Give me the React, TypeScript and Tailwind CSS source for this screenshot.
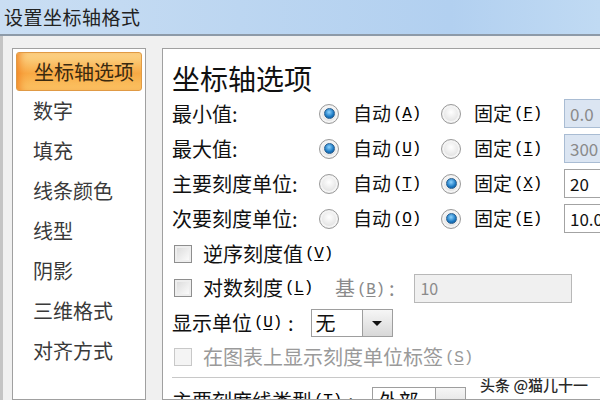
import React from "react";

const F = { fontFamily: '"Noto Sans CJK SC", "Noto Sans", sans-serif' };

function Key({ k }: { k: string }) {
  return (
    <span className="text-[16px] ml-[2px] font-['Liberation_Mono',monospace] tracking-[-0.3px]">
      (<span className="underline underline-offset-2">{k}</span>)
    </span>
  );
}

function Radio({ on }: { on: boolean }) {
  return (
    <span className="w-[20px] h-[20px] rounded-full border border-[#9a9a9a] bg-[radial-gradient(circle_at_50%_40%,#ffffff,#d4d4d4)] flex items-center justify-center shrink-0 shadow-[inset_0_0_0_2px_#f4f4f4]">
      {on && (
        <span className="w-[11px] h-[11px] rounded-full bg-[radial-gradient(circle_at_45%_35%,#8fd4ff,#1a78c2_60%,#0b4f8c)] border border-[#2a5f8f]" />
      )}
    </span>
  );
}

function Check({ dim }: { dim?: boolean }) {
  return (
    <span
      className={
        "w-[18px] h-[18px] shrink-0 border " +
        (dim
          ? "border-[#c8c8c8] bg-[#f4f4f4]"
          : "border-[#8e8e8e] bg-[linear-gradient(135deg,#d8d8d8,#ffffff)] shadow-[inset_0_0_0_2px_#eeeeee]")
      }
    />
  );
}

function AxisRow({
  label,
  a,
  b,
  autoOn,
  value,
  disabled,
}: {
  label: string;
  a: string;
  b: string;
  autoOn: boolean;
  value: string;
  disabled: boolean;
}) {
  return (
    <div className="flex items-center h-[35px] shrink-0">
      <div className="w-[147px] shrink-0 text-[20px] text-[#111]">{label}</div>
      <div className="w-[122px] shrink-0 flex items-center">
        <Radio on={autoOn} />
        <span className="ml-[14px] text-[19px] text-[#111]">自动</span>
        <Key k={a} />
      </div>
      <div className="w-[123px] shrink-0 flex items-center">
        <Radio on={!autoOn} />
        <span className="ml-[13px] text-[19px] text-[#111]">固定</span>
        <Key k={b} />
      </div>
      <div
        className={
          "h-[29px] w-[60px] shrink-0 border flex items-center pl-[5px] text-[17px] " +
          (disabled
            ? "bg-[#dbe5f2] border-[#a9bcd3] text-[#8a8a8a]"
            : "bg-white border-[#a3a3a3] text-[#111]")
        }
      >
        {value}
      </div>
    </div>
  );
}

function Select({ text, w, pl }: { text: string; w: string; pl: string }) {
  return (
    <div className={"h-[28px] border border-[#9e9e9e] flex bg-white shrink-0 " + w}>
      <span className={"flex-1 flex items-center text-[20px] text-[#111] " + pl}>{text}</span>
      <span className="w-[30px] border-l border-[#9e9e9e] bg-[linear-gradient(180deg,#f6f6f6,#d8d8d8)] flex items-center justify-center">
        <span className="w-0 h-0 border-l-[5px] border-r-[5px] border-t-[5px] border-l-transparent border-r-transparent border-t-[#111]" />
      </span>
    </div>
  );
}

export default function App() {
  const items = ["数字", "填充", "线条颜色", "线型", "阴影", "三维格式", "对齐方式"];
  return (
    <div style={F} className="w-[600px] h-[400px] overflow-hidden relative bg-[#f0f0f0] flex flex-col">
      <div className="h-[36px] shrink-0 bg-[linear-gradient(90deg,#cadef3,#bcd6f1_40%,#b2d0f0_75%,#c0daf3)] border-b-2 border-[#8d9aa8] flex items-center pl-[4px]">
        <span className="text-[19px] text-[#222] tracking-[0.5px]">设置坐标轴格式</span>
      </div>
      <div className="flex flex-1 min-h-0 border-l-[3px] border-[#c4c4c4] pt-[12px]">
        <div className="ml-[9px] w-[134px] shrink-0 bg-white border border-[#a0a0a0] p-[3px] flex flex-col">
          <div className="h-[39px] shrink-0 rounded-[3px] border border-[#e09a45] bg-[linear-gradient(180deg,#fcd98e,#f8a944_55%,#fbc566)] flex items-center pl-[17px] text-[20px] text-[#3a2a10] whitespace-nowrap shadow-[inset_6px_0_8px_-4px_#f07f20]">
            坐标轴选项
          </div>
          {items.map((t) => (
            <div key={t} className="h-[40px] shrink-0 flex items-center pl-[17px] text-[20px] text-[#3a3a3a] first:mt-[2px]">
              {t}
            </div>
          ))}
        </div>
        <div className="ml-[16px] flex-1 min-w-0 overflow-hidden bg-white border border-[#a0a0a0] border-r-0 pl-[9px] flex flex-col whitespace-nowrap">
          <div className="text-[28px] text-[#111] leading-[34px] mt-[12px] mb-[1px]">坐标轴选项</div>
          <AxisRow label="最小值:" a="A" b="F" autoOn value="0.0" disabled />
          <AxisRow label="最大值:" a="U" b="I" autoOn value="300" disabled />
          <AxisRow label="主要刻度单位:" a="T" b="X" autoOn={false} value="20" disabled={false} />
          <AxisRow label="次要刻度单位:" a="O" b="E" autoOn={false} value="10.0" disabled={false} />
          <div className="flex items-center h-[35px] shrink-0 pl-[2px]">
            <Check />
            <span className="ml-[11px] text-[20px] text-[#111]">逆序刻度值</span>
            <Key k="V" />
          </div>
          <div className="flex items-center h-[34px] shrink-0 pl-[2px]">
            <Check />
            <span className="ml-[11px] text-[20px] text-[#111]">对数刻度</span>
            <Key k="L" />
            <span className="ml-[22px] text-[20px] text-[#8a8a8a]">基</span>
            <span className="text-[#8a8a8a]"><Key k="B" /></span>
            <span className="ml-[4px] text-[20px] text-[#8a8a8a]">:</span>
            <div className="ml-[20px] w-[158px] h-[29px] shrink-0 border border-[#b8b8b8] bg-[#f0f0f0] flex items-center pl-[5px] text-[16px] text-[#8a8a8a]">
              10
            </div>
          </div>
          <div className="flex items-center h-[36px] shrink-0">
            <span className="text-[20px] text-[#111]">显示单位</span>
            <Key k="U" />
            <span className="ml-[6px] text-[20px] text-[#111]">:</span>
            <div className="ml-[17px]">
              <Select text="无" w="w-[82px]" pl="pl-[4px]" />
            </div>
          </div>
          <div className="flex items-center h-[31px] shrink-0 pl-[2px]">
            <Check dim />
            <span className="ml-[11px] text-[20px] text-[#9a9a9a]">在图表上显示刻度单位标签</span>
            <span className="text-[#9a9a9a]"><Key k="S" /></span>
          </div>
          <div className="h-px shrink-0 bg-[#c8c8c8] mt-[5px]" />
          <div className="flex items-center mt-[8px] shrink-0">
            <span className="text-[20px] text-[#111]">主要刻度线类型</span>
            <Key k="T" />
            <span className="ml-[6px] text-[20px] text-[#111]">:</span>
            <div className="ml-[18px]">
              <Select text="外部" w="w-[94px]" pl="pl-[6px]" />
            </div>
          </div>
        </div>
      </div>
      <div className="absolute left-[480px] top-[374px] text-[15px] font-medium text-[#2a2a2a] [text-shadow:0_0_2px_#fff,0_0_2px_#fff]">
        头条 @猫儿十一
      </div>
    </div>
  );
}
